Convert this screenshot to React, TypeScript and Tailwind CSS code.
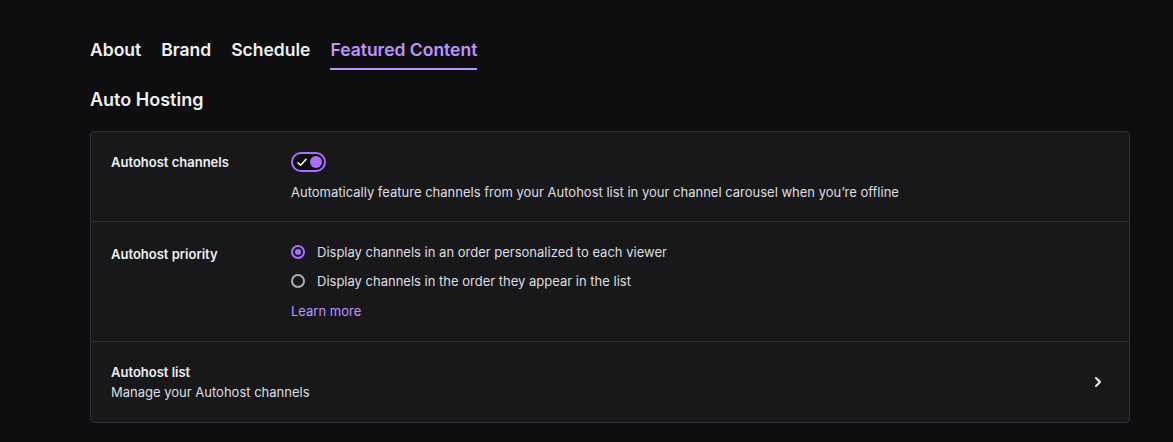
import { ChevronRight } from "lucide-react";

const tabs = ["About", "Brand", "Schedule", "Featured Content"];

export default function App() {
  return (
    <div className="min-h-[442px] bg-[#0e0e10] pl-[90px] pr-[43px] pt-[38px] text-[#efeff1] font-['Inter',sans-serif]">
      <div className="flex gap-[20px]">
        {tabs.map((t, i) => (
          <div
            key={t}
            className={`pb-[6px] border-b-2 text-[17.5px] font-semibold leading-[24px] ${
              i === 3 ? "text-[#bf94ff] border-[#bf94ff]" : "border-transparent"
            }`}
          >
            {t}
          </div>
        ))}
      </div>

      <h2 className="mt-[18px] text-[18px] font-semibold leading-[24px]">Auto Hosting</h2>

      <div className="mt-[19px] rounded-[4px] border border-[#2f2f35] bg-[#18181b] text-[13px]">
        <div className="flex px-[20px] pt-[20px] pb-[19px] border-b border-[#2f2f35]">
          <div className="w-[180px] font-semibold leading-[20px]">Autohost channels</div>
          <div className="flex flex-col">
            <div className="relative h-[20px] w-[35px] rounded-full border-2 border-[#a970ff] bg-[#0e0e10]">
              <svg className="absolute left-[4px] top-[4px]" width="10" height="9" viewBox="0 0 10 9" fill="none">
                <path d="M1 4.8 L3.6 7.2 L9 1.4" stroke="#efeff1" strokeWidth="1.6" strokeLinecap="round" strokeLinejoin="round" />
              </svg>
              <div className="absolute right-[2px] top-[2px] h-[12px] w-[12px] rounded-full bg-[#a970ff]" />
            </div>
            <p className="mt-[10px] leading-[20px] text-[#dedee3]">
              Automatically feature channels from your Autohost list in your channel carousel when you’re offline
            </p>
          </div>
        </div>

        <div className="flex px-[20px] pt-[19px] pb-[19px] border-b border-[#2f2f35]">
          <div className="w-[180px] pt-[2px] font-semibold leading-[22px]">Autohost priority</div>
          <div className="flex flex-col gap-[7px]">
            <label className="flex items-center gap-[12px] leading-[22px] text-[#dedee3]">
              <span className="flex h-[14px] w-[14px] items-center justify-center rounded-full border-2 border-[#a970ff]">
                <span className="h-[6px] w-[6px] rounded-full bg-[#a970ff]" />
              </span>
              Display channels in an order personalized to each viewer
            </label>
            <label className="flex items-center gap-[12px] leading-[22px] text-[#dedee3]">
              <span className="h-[14px] w-[14px] rounded-full border-2 border-[#adadb8]" />
              Display channels in the order they appear in the list
            </label>
            <a className="mt-[1px] leading-[22px] text-[#bf94ff]">Learn more</a>
          </div>
        </div>

        <div className="flex items-center justify-between px-[20px] pt-[20px] pb-[20px]">
          <div className="leading-[20px]">
            <div className="font-semibold">Autohost list</div>
            <div className="text-[#dedee3]">Manage your Autohost channels</div>
          </div>
          <ChevronRight size={16} strokeWidth={3} className="mr-[3px]" />
        </div>
      </div>
    </div>
  );
}
